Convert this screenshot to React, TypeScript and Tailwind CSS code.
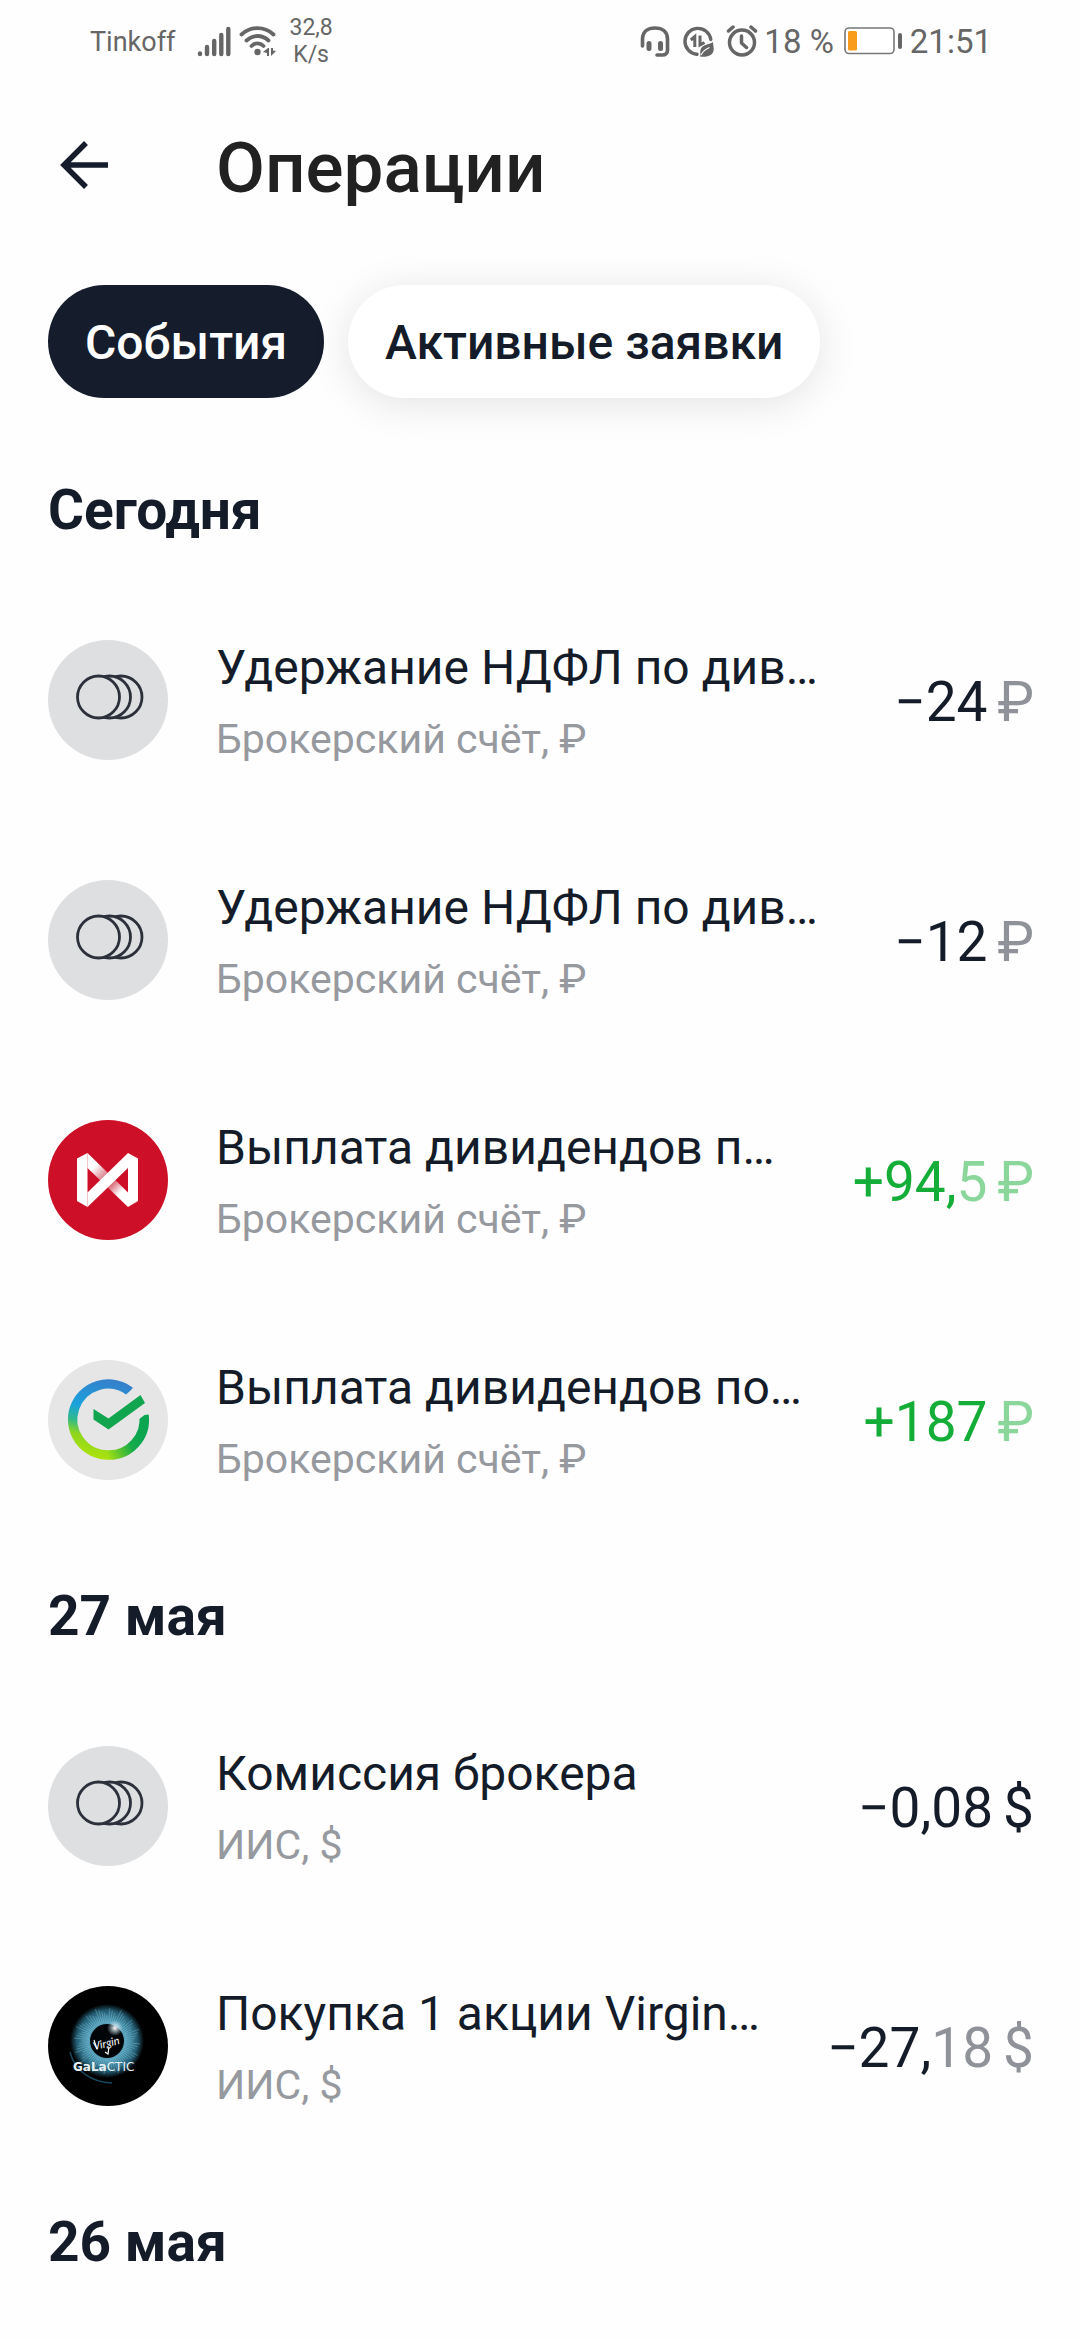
import type { ReactNode } from "react";

function SignalIcon() {
  return (
    <svg width="34" height="32" viewBox="0 0 34 32" stroke="#666" strokeWidth="4.4" strokeLinecap="round" aria-hidden="true">
      <path d="M3 28.5v.5M10 22v7M17.2 16v13M24.3 10v19M31.3 4v25" />
    </svg>
  );
}

function WifiIcon() {
  return (
    <svg width="38" height="32" viewBox="0 0 38 32" fill="none" stroke="#666" strokeWidth="3.8" strokeLinecap="round" aria-hidden="true">
      <path d="M2.500 9.500C11.500 1 25.500 1 34.500 9.500M7.500 15.500C14 9.500 23 9.500 29.500 15.500M12.500 21C16 17.500 21 17.500 24.500 21" />
      <circle cx="18.500" cy="27" r="3.200" fill="#666" stroke="none" />
      <path d="M30 23v8h-2v-3l-4-1 5-4zM32 23v8l5-5-3-.5V23z" fill="#666" stroke="none" />
    </svg>
  );
}

function HeadsetIcon() {
  return (
    <svg width="30" height="32" viewBox="0 0 30 32" fill="none" stroke="#666" strokeWidth="3.600" strokeLinecap="round" aria-hidden="true">
      <path d="M2.500 21V14C2.500 6.500 8 3 15 3s12.500 3.500 12.500 11v11c0 3-2 5-5 5h-5.500" />
      <path d="M9 18.500v5M20.500 18.500v5" strokeWidth="5" />
    </svg>
  );
}

function DataSaverIcon() {
  return (
    <svg width="32" height="32" viewBox="0 0 32 32" fill="none" stroke="#666" strokeWidth="3.400" aria-hidden="true">
      <path d="M15 29.300A13 13 0 1 1 28.800 14.500" strokeLinecap="round" />
      <path d="M12.800 22V11.500l-4 3.500M18 10.500V20l4.500-2.500" strokeWidth="3" />
      <path d="M31 17c-4 3-11 2-12.500 8-.8 3 .5 4.500-.5 6.500 5 1 12 0 13.500-5.500.7-3-.5-6-.5-9z" fill="#666" stroke="none" />
      <path d="M19 30c2-4 5-6 8.500-7.500" stroke="#fff" strokeWidth="1.200" />
    </svg>
  );
}

function AlarmIcon() {
  return (
    <svg width="32" height="32" viewBox="0 0 32 32" fill="none" stroke="#666" strokeWidth="3.500" strokeLinecap="round" strokeLinejoin="round" aria-hidden="true">
      <circle cx="16" cy="17.500" r="12.500" />
      <path d="M15.500 11v7l5 4.500M2.500 6l4.500-4M29.500 6L25 2" />
    </svg>
  );
}

function BatteryIcon() {
  return (
    <svg width="58" height="28" viewBox="0 0 58 28" aria-hidden="true">
      <rect x="1" y="1" width="49" height="25.500" rx="4" fill="#fff" stroke="#777" strokeWidth="1.600" />
      <rect x="4" y="4" width="9" height="19.500" rx="1.500" fill="#f99b1c" />
      <rect x="54" y="6" width="4" height="16" rx="2" fill="#666" />
    </svg>
  );
}

function StatusBar() {
  return (
    <div className="flex h-20 items-center justify-between pt-[2px] pr-[88px] pl-[90px] text-[#666666]">
      <div className="flex items-center">
        <span className="pt-[2px] text-[27px] leading-8">Tinkoff</span>
        <span className="ml-[22px] flex gap-2">
          <SignalIcon />
          <WifiIcon />
        </span>
        <span className="ml-3 text-center text-[23px] leading-[27px]">
          32,8
          <br />
          K/s
        </span>
      </div>
      <div className="flex items-center text-[33px] leading-10">
        <span className="mr-[6px] flex gap-3">
          <HeadsetIcon />
          <DataSaverIcon />
          <AlarmIcon />
        </span>
        <span className="pt-[2px]">18 %</span>
        <span className="mr-2 ml-[10px]">
          <BatteryIcon />
        </span>
        <span className="pt-[2px]">21:51</span>
      </div>
    </div>
  );
}

function Disc({ className, children }: { className: string; children: ReactNode }) {
  return (
    <span className={`size-[120px] shrink-0 overflow-hidden rounded-full ${className}`}>
      <svg width="120" height="120" viewBox="0 0 120 120" fill="none" aria-hidden="true">
        {children}
      </svg>
    </span>
  );
}

function CoinsLogo() {
  return (
    <Disc className="bg-[#dddfe1]">
      <g stroke="#2b303b" strokeWidth="2.800" fill="#dddfe1">
        <circle cx="73" cy="57" r="21" />
        <circle cx="61.500" cy="57" r="21" />
        <circle cx="50.500" cy="57" r="21" />
      </g>
    </Disc>
  );
}

function MoexLogo() {
  return (
    <Disc className="bg-[#cd1027]">
      <defs>
        <linearGradient id="moex-fold" gradientUnits="userSpaceOnUse" x1="46" y1="47" x2="73" y2="72">
          <stop offset="0" stopColor="#fff" />
          <stop offset="0.380" stopColor="#dc8590" />
          <stop offset="0.620" stopColor="#d45565" />
          <stop offset="1" stopColor="#fff" />
        </linearGradient>
      </defs>
      <path d="M39.500 33L80 72.500V87L39.500 48z" fill="url(#moex-fold)" />
      <path d="M29 38.500L39.500 33v54L29 81z" fill="#fff" />
      <path d="M80 33l10 5.500V81l-10 6z" fill="#fff" />
      <path d="M80 33v15L39.500 87V72.500z" fill="#fff" />
    </Disc>
  );
}

function SberLogo() {
  return (
    <Disc className="bg-[#e6e6e7]">
      <defs>
        <linearGradient id="sber-left" gradientUnits="userSpaceOnUse" x1="60" y1="20" x2="40" y2="100">
          <stop offset="0" stopColor="#3580cb" />
          <stop offset="0.380" stopColor="#1ba2dc" />
          <stop offset="0.560" stopColor="#2fb98c" />
          <stop offset="0.720" stopColor="#8ed51d" />
          <stop offset="1" stopColor="#b2e50b" />
        </linearGradient>
        <linearGradient id="sber-right" gradientUnits="userSpaceOnUse" x1="58" y1="95" x2="92" y2="78">
          <stop offset="0" stopColor="#a8e110" />
          <stop offset="0.700" stopColor="#17ab4b" />
          <stop offset="1" stopColor="#0ca650" />
        </linearGradient>
      </defs>
      <path d="M82 31.500A35.500 35.500 0 1 0 60 95" stroke="url(#sber-left)" strokeWidth="9.500" />
      <path d="M59.500 95A35.500 35.500 0 0 0 96 55" stroke="url(#sber-right)" strokeWidth="9.500" />
      <path d="M78 34.500l7.500-6.500 8 8-12 6z" fill="#e6e6e7" />
      <path d="M90 60l11-8.500-5-6-12 10z" fill="#e6e6e7" />
      <path d="M45.500 49l15 9.500L92.500 35l4.500 8-36.500 26.500-15-10z" fill="#12a550" />
    </Disc>
  );
}

const RAYS = Array.from({ length: 72 }, (_, i) => {
  const a = (i * Math.PI) / 36;
  const r = 26 + ((i * 7) % 9);
  const x = (n: number) => (59 + Math.cos(a) * n).toFixed(1);
  const y = (n: number) => (55 + Math.sin(a) * n).toFixed(1);
  return `M${x(18)} ${y(18)}L${x(r)} ${y(r)}`;
}).join("");

function VirginLogo() {
  return (
    <Disc className="bg-black">
      <defs>
        <radialGradient id="iris" gradientUnits="userSpaceOnUse" cx="59" cy="55" r="37">
          <stop offset="0.400" stopColor="#5fa9c2" />
          <stop offset="0.620" stopColor="#3f88a2" />
          <stop offset="0.820" stopColor="#235c72" />
          <stop offset="1" stopColor="#000" />
        </radialGradient>
        <radialGradient id="glint">
          <stop offset="0" stopColor="#fff" />
          <stop offset="1" stopColor="#bfe8f7" stopOpacity="0" />
        </radialGradient>
      </defs>
      <circle cx="59" cy="55" r="37" fill="url(#iris)" />
      <path d={RAYS} stroke="#9fd6e8" strokeOpacity="0.350" strokeWidth="1" />
      <path d="M22 66c5 20 22 30 42 31" stroke="#17485c" strokeWidth="1.500" />
      <circle cx="59" cy="55" r="17" fill="#020507" />
      <circle cx="67" cy="42" r="8" fill="url(#glint)" />
      <text x="45" y="61" transform="rotate(-14 59 58)" fill="#fff" fontFamily="Lato, sans-serif" fontStyle="italic" fontSize="11">
        Virgin
      </text>
      <path d="M46 54l3 9M61 61l-1 7-3-2" stroke="#fff" strokeWidth="1.200" />
      <text x="25" y="85" fill="#e8f2f5" fontFamily="DejaVu Sans, sans-serif" fontSize="12">
        <tspan fontWeight="700">GaLa</tspan>CTIC
      </text>
    </Disc>
  );
}

type Operation = {
  logo: ReactNode;
  title: string;
  account: string;
  main: string;
  minor?: string;
  currency: string;
  tone: string;
  minorTone: string;
  currencyTone: string;
};

const DARK = "text-[#151c29]";
const GRAY = "text-[#8f9298]";
const GREEN = "text-[#13ad37]";
const LIGHT_GREEN = "text-[#8ad69b]";

const days: { label: string; operations: Operation[] }[] = [
  {
    label: "Сегодня",
    operations: [
      { logo: <CoinsLogo />, title: "Удержание НДФЛ по див…", account: "Брокерский счёт, ₽", main: "−24", currency: "₽", tone: DARK, minorTone: GRAY, currencyTone: GRAY },
      { logo: <CoinsLogo />, title: "Удержание НДФЛ по див…", account: "Брокерский счёт, ₽", main: "−12", currency: "₽", tone: DARK, minorTone: GRAY, currencyTone: GRAY },
      { logo: <MoexLogo />, title: "Выплата дивидендов п…", account: "Брокерский счёт, ₽", main: "+94,", minor: "5", currency: "₽", tone: GREEN, minorTone: LIGHT_GREEN, currencyTone: LIGHT_GREEN },
      { logo: <SberLogo />, title: "Выплата дивидендов по…", account: "Брокерский счёт, ₽", main: "+187", currency: "₽", tone: GREEN, minorTone: LIGHT_GREEN, currencyTone: LIGHT_GREEN },
    ],
  },
  {
    label: "27 мая",
    operations: [
      { logo: <CoinsLogo />, title: "Комиссия брокера", account: "ИИС, $", main: "−0,08", currency: "$", tone: DARK, minorTone: GRAY, currencyTone: DARK },
      { logo: <VirginLogo />, title: "Покупка 1 акции Virgin…", account: "ИИС, $", main: "−27,", minor: "18", currency: "$", tone: DARK, minorTone: GRAY, currencyTone: GRAY },
    ],
  },
  { label: "26 мая", operations: [] },
];

function OperationRow({ op }: { op: Operation }) {
  return (
    <li className="flex h-[240px] items-center">
      {op.logo}
      <div className="ml-12 min-w-0 flex-1 pt-[2px]">
        <p className={`truncate text-[48px] leading-[60px] ${DARK}`}>{op.title}</p>
        <p className="mt-4 truncate text-[41px] leading-[50px] text-[#96999e]">{op.account}</p>
      </div>
      <p className="ml-8 flex pt-1 text-[55px] leading-[64px] whitespace-nowrap">
        <span className={op.tone}>{op.main}</span>
        {op.minor && <span className={op.minorTone}>{op.minor}</span>}
        <span className={`ml-[10px] ${op.currencyTone}`}>{op.currency}</span>
      </p>
    </li>
  );
}

export default function App() {
  return (
    <div className="min-h-screen overflow-hidden bg-[#fefefe] font-[Roboto,sans-serif]">
      <StatusBar />
      <header className="flex h-[170px] items-center px-[60px]">
        <button type="button" aria-label="Назад" className="h-12 w-12">
          <svg width="48" height="48" viewBox="0 0 48 48" fill="none" stroke="#151c2c" strokeWidth="5.500" aria-hidden="true">
            <path d="M48 24H4M26 2L4 24l22 22" />
          </svg>
        </button>
        <h1 className="ml-[108px] pt-[6px] text-[71px] leading-[80px] font-medium text-[#212121]">Операции</h1>
      </header>
      <nav className="mt-[35px] mb-9 flex gap-6 px-12 text-[48px] leading-[56px] font-medium">
        <button type="button" aria-pressed="true" className="h-[113px] rounded-full bg-[#151d2c] px-[37px] pt-[3px] text-white">
          События
        </button>
        <button type="button" aria-pressed="false" className={`h-[113px] rounded-full bg-white px-[37px] pt-[3px] shadow-[0_6px_42px_rgba(0,0,0,0.11)] ${DARK}`}>
          Активные заявки
        </button>
      </nav>
      <main className="pr-[46px] pl-12">
        {days.map((day) => (
          <section key={day.label}>
            <h2 className={`flex h-[146px] items-center pt-[6px] text-[55px] leading-[64px] font-bold ${DARK}`}>{day.label}</h2>
            <ul>
              {day.operations.map((op, i) => (
                <OperationRow key={i} op={op} />
              ))}
            </ul>
          </section>
        ))}
      </main>
    </div>
  );
}
